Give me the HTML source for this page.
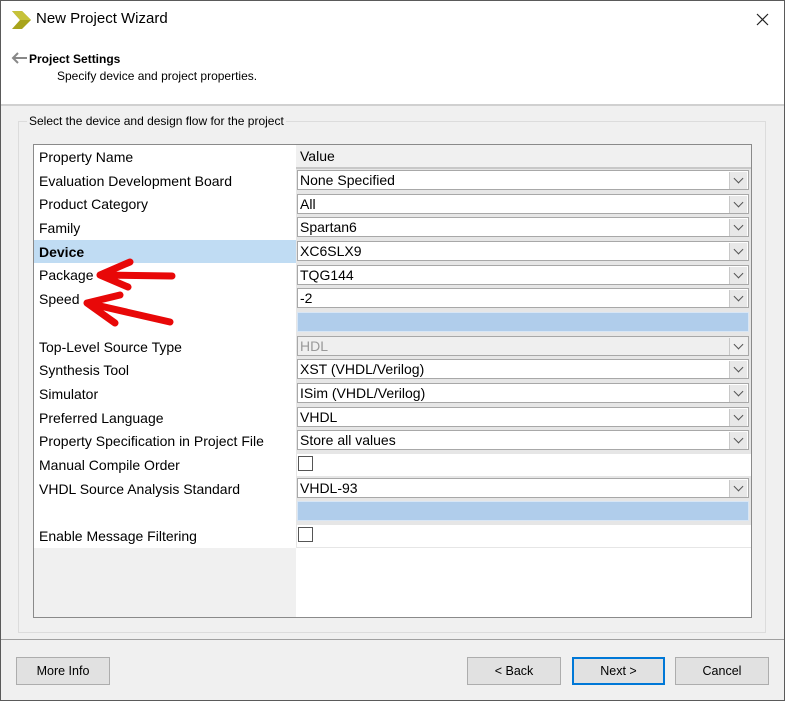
<!DOCTYPE html>
<html><head><style>
*{margin:0;padding:0;box-sizing:border-box}
body{width:785px;height:701px;position:relative;overflow:hidden;background:#f0f0f0;font-family:"Liberation Sans",sans-serif;color:#000}
.win{position:absolute;left:0;top:0;width:785px;height:701px;border:1px solid #5a5a5a}
.abs{position:absolute}
.lbl{position:absolute;left:39px;font-size:14px;white-space:nowrap}
.cell{position:absolute;left:296px;width:455px;background:#e6e6e6;border-top:1px solid #c8c8c8}
.combo{position:absolute;left:297px;width:452px;height:20px;background:#fff;border:1px solid #a8a8a8;font-size:14px;padding-left:2px;line-height:18px}
.btn{position:absolute;right:1px;top:1px;width:18px;height:17px;background:#e8e8e8;border-left:1px solid #c8c8c8}
.btn:after{content:"";position:absolute;left:5px;top:3px;width:6px;height:6px;border-right:1px solid #555;border-bottom:1px solid #555;transform:rotate(45deg)}
.pb{position:absolute;height:28px;background:#e1e1e1;border:1px solid #adadad;font-size:12.5px;text-align:center;line-height:26px}
</style></head><body>
<div class="win"></div>
<div class="abs" style="left:1px;top:1px;width:783px;height:103px;background:#fff"></div>
<svg class="abs" style="left:10px;top:10px" width="22" height="20"><polygon points="2,1 12,1 21,10 12,19 2,19 10,10" fill="#a8a41c"/><polygon points="2,1 12,1 21,10 10,10" fill="#c6c23a"/></svg>
<div class="abs" style="left:36px;top:10px;font-size:15px">New Project Wizard</div>
<svg class="abs" style="left:756px;top:13px" width="13" height="13"><path d="M1 1L12 12M12 1L1 12" stroke="#222" stroke-width="1.2"/></svg>
<svg class="abs" style="left:11px;top:52px" width="18" height="12"><path d="M16 6H2M7 1L2 6L7 11" stroke="#888" stroke-width="2" fill="none"/></svg>
<div class="abs" style="left:29px;top:52px;font-size:12px;font-weight:bold">Project Settings</div>
<div class="abs" style="left:57px;top:69px;font-size:12px">Specify device and project properties.</div>
<div class="abs" style="left:1px;top:104px;width:783px;height:2px;background:#d0d0d0"></div>
<div class="abs" style="left:18px;top:121px;width:748px;height:512px;border:1px solid #dcdcdc"></div>
<div class="abs" style="left:27px;top:114px;font-size:12px;background:#f0f0f0;padding:0 2px">Select the device and design flow for the project</div>
<div class="abs" style="left:33px;top:144px;width:719px;height:474px;background:#fff;border:1px solid #8a8a8a"></div>
<div class="abs" style="left:34px;top:548px;width:262px;height:69px;background:#f0f0f0"></div>
<div class="abs" style="left:296px;top:145px;width:455px;height:23px;background:#f0f0f0;border-bottom:1px solid #c8c8c8;font-size:14px;padding:3px 4px">Value</div>
<div class="abs" style="left:34px;top:240px;width:262px;height:23px;background:#c0dcf3"></div>
<div class="lbl" style="top:149px">Property Name</div>
<div class="lbl" style="top:173px">Evaluation Development Board</div>
<div class="lbl" style="top:196px">Product Category</div>
<div class="lbl" style="top:220px">Family</div>
<div class="lbl" style="top:244px;font-weight:bold">Device</div>
<div class="lbl" style="top:267px">Package</div>
<div class="lbl" style="top:291px">Speed</div>
<div class="lbl" style="top:339px">Top-Level Source Type</div>
<div class="lbl" style="top:362px">Synthesis Tool</div>
<div class="lbl" style="top:386px">Simulator</div>
<div class="lbl" style="top:410px">Preferred Language</div>
<div class="lbl" style="top:433px">Property Specification in Project File</div>
<div class="lbl" style="top:457px">Manual Compile Order</div>
<div class="lbl" style="top:481px">VHDL Source Analysis Standard</div>
<div class="lbl" style="top:528px">Enable Message Filtering</div>

<div class="cell" style="top:168px;height:380px"></div>
<div class="combo" style="top:170px">None Specified<div class="btn"></div></div>
<div class="combo" style="top:194px">All<div class="btn"></div></div>
<div class="combo" style="top:217px">Spartan6<div class="btn"></div></div>
<div class="combo" style="top:241px">XC6SLX9<div class="btn"></div></div>
<div class="combo" style="top:265px">TQG144<div class="btn"></div></div>
<div class="combo" style="top:288px">-2<div class="btn"></div></div>
<div class="abs" style="left:297px;top:312px;width:452px;height:20px;background:#b0cdeb;border:1px solid #d8e6f5"></div>
<div class="combo" style="top:336px;background:#efefef;color:#999">HDL<div class="btn" style="background:#efefef"></div></div>
<div class="combo" style="top:359px">XST (VHDL/Verilog)<div class="btn"></div></div>
<div class="combo" style="top:383px">ISim (VHDL/Verilog)<div class="btn"></div></div>
<div class="combo" style="top:407px">VHDL<div class="btn"></div></div>
<div class="combo" style="top:430px">Store all values<div class="btn"></div></div>
<div class="abs" style="left:297px;top:454px;width:454px;height:22px;background:#fff"><div class="abs" style="left:1px;top:2px;width:15px;height:15px;border:1px solid #555;background:#fff"></div></div>
<div class="combo" style="top:478px">VHDL-93<div class="btn"></div></div>
<div class="abs" style="left:297px;top:501px;width:452px;height:20px;background:#b0cdeb;border:1px solid #d8e6f5"></div>
<div class="abs" style="left:297px;top:525px;width:454px;height:22px;background:#fff"><div class="abs" style="left:1px;top:2px;width:15px;height:15px;border:1px solid #555;background:#fff"></div></div>
<div class="abs" style="left:296px;top:548px;width:455px;height:69px;background:#fff"></div>

<svg class="abs" style="left:0;top:0" width="785" height="701">
<g stroke="#e80808" stroke-width="7" stroke-linecap="round" stroke-linejoin="round" fill="none">
<path d="M172 276 L100 275 M130 262 L100 275 L128 287"/>
<path d="M170 322 L87 303 M120 295 L87 303 L115 323"/>
</g></svg>

<div class="abs" style="left:1px;top:639px;width:783px;height:1px;background:#a0a0a0"></div>
<div class="pb" style="left:16px;top:657px;width:94px">More Info</div>
<div class="pb" style="left:467px;top:657px;width:94px">&lt; Back</div>
<div class="pb" style="left:572px;top:657px;width:93px;border:2px solid #0078d7;line-height:24px">Next &gt;</div>
<div class="pb" style="left:675px;top:657px;width:94px">Cancel</div>
</body></html>
